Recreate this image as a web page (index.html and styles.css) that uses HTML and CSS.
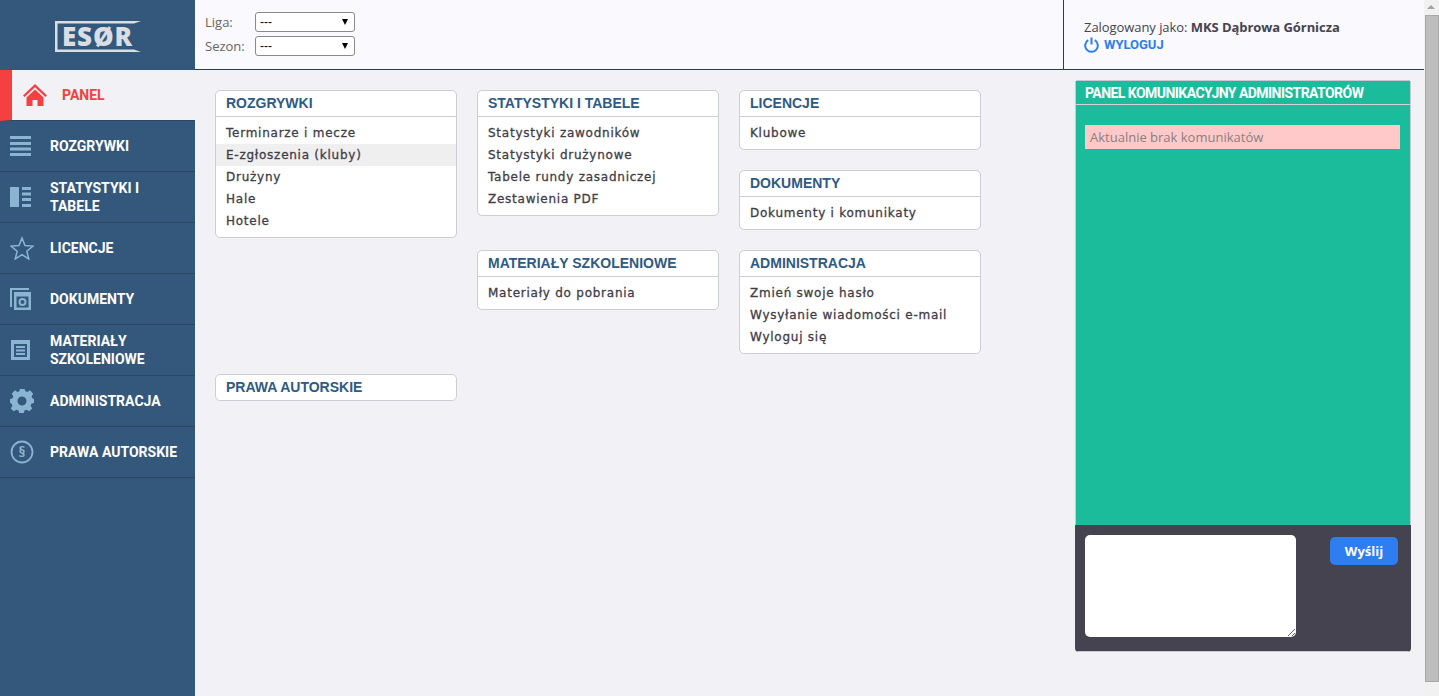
FILE: index.html
```html
<!DOCTYPE html>
<html>
<head>
  <title>ESOR - Panel</title>
  <link rel="stylesheet" href="styles.css">
</head>
<body>
  <div class="app">
    <aside class="sidebar">
      <div class="logo">
        <div class="logo-box">
          <svg width="87" height="31" viewBox="0 0 87 31">
            <path d="M0 0H86L79 2.500H2.500V28.500H79L86 31H0Z" fill="#d9dde4"/>
          </svg>
          <span class="logo-text">ESØR</span>
        </div>
      </div>
      <nav>
        <a class="nav-item active" href="#">
          <span class="nav-icon">
            <svg width="26" height="24" viewBox="0 0 26 24"><path d="M13 1L1 12.5l1.6 1.6L13 4.2l10.4 9.9 1.6-1.6ZM4.5 14.5V23h6v-6h5v6h6v-8.5L13 6.5Z" fill="#f44040"/></svg>
          </span>
          <span>PANEL</span>
        </a>
        <a class="nav-item" href="#">
          <span class="nav-icon">
            <svg width="22" height="22" viewBox="0 0 22 22"><path d="M0 1h21v3H0ZM0 7h21v3H0ZM0 12.500h21v3H0ZM0 18h21v3H0Z" fill="#8ab4d2"/></svg>
          </span>
          <span>ROZGRYWKI</span>
        </a>
        <a class="nav-item" href="#">
          <span class="nav-icon">
            <svg width="22" height="22" viewBox="0 0 22 22"><path d="M0 1h9v20H0ZM12 1h9v3h-9ZM12 6.500h9v3h-9ZM12 12h9v3h-9ZM12 18h9v3h-9Z" fill="#8ab4d2"/></svg>
          </span>
          <span>STATYSTYKI I TABELE</span>
        </a>
        <a class="nav-item" href="#">
          <span class="nav-icon">
            <svg width="24" height="24" viewBox="0 0 24 24"><path d="M12 2l3 7.500 8 .6-6.200 5.100 2 7.800L12 18.700 5.200 23l2-7.800L1 10.100l8-.6Z" fill="none" stroke="#8ab4d2" stroke-width="1.500"/></svg>
          </span>
          <span>LICENCJE</span>
        </a>
        <a class="nav-item" href="#">
          <span class="nav-icon">
            <svg width="22" height="22" viewBox="0 0 22 22"><path d="M1 19V1h18" fill="none" stroke="#8ab4d2" stroke-width="2"/><path d="M4 4h17v18H4Zm2.500 4.500v11h12v-11Z" fill="#8ab4d2" fill-rule="evenodd"/><circle cx="12.500" cy="14" r="3" fill="none" stroke="#8ab4d2" stroke-width="2"/></svg>
          </span>
          <span>DOKUMENTY</span>
        </a>
        <a class="nav-item" href="#">
          <span class="nav-icon">
            <svg width="22" height="22" viewBox="0 0 22 22"><path d="M1 1h19v20H1ZM4 5v13h13V5ZM6 7h9v2H6ZM6 10.500h9v2H6ZM6 14h9v2H6Z" fill="#8ab4d2" fill-rule="evenodd"/></svg>
          </span>
          <span>MATERIAŁY SZKOLENIOWE</span>
        </a>
        <a class="nav-item" href="#">
          <span class="nav-icon">
            <svg width="24" height="24" viewBox="0 0 24 24"><path d="M9.500 1h5l.6 3 2.300 1 2.600-1.700 3.200 3.500L21.600 9.300l.9 2.200 1.500.5v4l-2.500.6-.9 2.200 1.600 2.600-3 2.800-2.500-1.500-2.300.9-.6 2.400h-4.600l-.6-2.400-2.300-.9-2.500 1.500-3-2.800 1.600-2.600-.9-2.200L0 16v-4l2.400-.5.900-2.200L1.700 6.800l3.200-3.500 2.600 1.700 2.300-1ZM12 9.500a4.500 4.500 0 1 0 0 9 4.500 4.500 0 0 0 0-9Z" fill="#8ab4d2" fill-rule="evenodd" transform="translate(0 -2)"/></svg>
          </span>
          <span>ADMINISTRACJA</span>
        </a>
        <a class="nav-item" href="#">
          <span class="nav-icon">
            <svg width="24" height="24" viewBox="0 0 24 24"><circle cx="12" cy="12" r="10.500" fill="none" stroke="#8ab4d2" stroke-width="1.800"/><text class="par-text" x="12" y="17" text-anchor="middle">§</text></svg>
          </span>
          <span>PRAWA AUTORSKIE</span>
        </a>
      </nav>
    </aside>

    <div class="page">
      <header class="topbar">
        <div class="filters">
          <label class="filter">
            <span class="filter-label">Liga:</span>
            <span class="select-wrap"><select><option>---</option></select></span>
          </label>
          <label class="filter">
            <span class="filter-label">Sezon:</span>
            <span class="select-wrap"><select><option>---</option></select></span>
          </label>
        </div>
        <div class="user-box">
          <div class="user-name">Zalogowany jako: <strong>MKS Dąbrowa Górnicza</strong></div>
          <a class="logout" href="#">
            <svg width="15" height="16" viewBox="0 0 15 16"><path d="M4.200 3.200a6.300 6.300 0 1 0 6.600 0M7.500 0.500v7" fill="none" stroke="#2f7ef0" stroke-width="2"/></svg>
            WYLOGUJ
          </a>
        </div>
      </header>

      <div class="content">
        <main class="cards">
          <section class="card c-rozgrywki">
            <h3>ROZGRYWKI</h3>
            <ul>
              <li>Terminarze i mecze</li>
              <li class="hover">E-zgłoszenia (kluby)</li>
              <li>Drużyny</li>
              <li>Hale</li>
              <li>Hotele</li>
            </ul>
          </section>
          <section class="card c-statystyki">
            <h3>STATYSTYKI I TABELE</h3>
            <ul>
              <li>Statystyki zawodników</li>
              <li>Statystyki drużynowe</li>
              <li>Tabele rundy zasadniczej</li>
              <li>Zestawienia PDF</li>
            </ul>
          </section>
          <section class="card c-licencje">
            <h3>LICENCJE</h3>
            <ul><li>Klubowe</li></ul>
          </section>
          <section class="card c-dokumenty">
            <h3>DOKUMENTY</h3>
            <ul><li>Dokumenty i komunikaty</li></ul>
          </section>
          <section class="card c-materialy">
            <h3>MATERIAŁY SZKOLENIOWE</h3>
            <ul><li>Materiały do pobrania</li></ul>
          </section>
          <section class="card c-admin">
            <h3>ADMINISTRACJA</h3>
            <ul>
              <li>Zmień swoje hasło</li>
              <li>Wysyłanie wiadomości e-mail</li>
              <li>Wyloguj się</li>
            </ul>
          </section>
          <section class="card c-prawa">
            <h3 class="only">PRAWA AUTORSKIE</h3>
          </section>
        </main>

        <aside class="chat">
          <div class="chat-title">PANEL KOMUNIKACYJNY ADMINISTRATORÓW</div>
          <div class="chat-body">
            <div class="chat-empty">Aktualnie brak komunikatów</div>
          </div>
          <div class="chat-form">
            <textarea></textarea>
            <button>Wyślij</button>
          </div>
        </aside>
      </div>
    </div>
  </div>

  <!-- scrollbar as it shows in the screenshot -->
  <div class="scrollbar">
    <div class="scroll-up"></div>
    <div class="scroll-thumb"></div>
    <div class="scroll-down"></div>
  </div>
</body>
</html>
```

FILE: styles.css
```css
* {
  box-sizing: border-box;
}

body {
  margin: 0;
  height: 696px;
  overflow: hidden;
  background: #f1f1f6;
  font-family: "Open Sans", Arial, sans-serif;
  font-size: 13px;
  color: #45434f;
}

.app {
  display: flex;
  height: 100%;
  padding-right: 15px;
}

/* sidebar */
.sidebar {
  width: 195px;
  flex-shrink: 0;
  background: #34587c;
}

.logo {
  height: 70px;
  padding: 21px 0 0 55px;
}

.logo-box {
  position: relative;
  width: 87px;
  height: 31px;
  padding-left: 7px;
}

.logo-box svg {
  position: absolute;
  top: 0;
  left: 0;
}

.logo-text {
  display: block;
  font-family: "Open Sans", sans-serif;
  font-weight: 800;
  font-size: 26px;
  line-height: 31px;
  letter-spacing: 0.8px;
  color: #d9dde4;
}

.par-text {
  font-family: "Open Sans", sans-serif;
  font-size: 14px;
  font-weight: 700;
  fill: #8ab4d2;
}

.nav-item {
  display: flex;
  align-items: center;
  height: 51px;
  padding-right: 10px;
  border-bottom: 1px solid #2a4764;
  color: #fff;
  text-decoration: none;
  font-family: Roboto, sans-serif;
  font-weight: 700;
  font-size: 14px;
  line-height: 18px;
}

.nav-icon {
  display: flex;
  width: 50px;
  flex-shrink: 0;
  padding-left: 10px;
}

.nav-item.active {
  border-left: 12px solid #f44040;
  background: #f1f1f6;
  color: #f44040;
}

/* top bar */
.page {
  flex: 1;
  display: flex;
  flex-direction: column;
}

.topbar {
  display: flex;
  justify-content: space-between;
  height: 70px;
  background: #f9f9fe;
  border-bottom: 1px solid #2c3e50;
}

.filters {
  padding: 12px 0 0 10px;
}

.filter {
  display: flex;
  align-items: center;
  height: 20px;
  margin-bottom: 4px;
}

.filter-label {
  width: 50px;
  color: #666;
}

.select-wrap {
  position: relative;
  display: block;
  width: 100px;
  height: 20px;
}

.select-wrap::after {
  content: '';
  position: absolute;
  top: 7px;
  right: 7px;
  border-left: 3.500px solid transparent;
  border-right: 3.500px solid transparent;
  border-top: 6px solid #000;
}

select {
  appearance: none;
  display: block;
  width: 100%;
  height: 20px;
  padding: 0 0 0 4px;
  border: 1px solid #8a8a8a;
  border-radius: 3px;
  background: #fff;
  font-family: Arial, "Liberation Sans", sans-serif;
  font-size: 12px;
  color: #000;
}

.user-box {
  width: 361px;
  padding: 18px 0 0 20px;
  border-left: 1px solid #2c3e50;
  line-height: 18px;
}

.user-name {
  letter-spacing: -0.06px;
}

.user-box strong {
  font-weight: 700;
}

.logout {
  display: flex;
  align-items: center;
  gap: 5px;
  color: #2f7ef0;
  text-decoration: none;
  font-family: Roboto, sans-serif;
  font-weight: 700;
  font-size: 13px;
}

/* content */
.content {
  flex: 1;
  display: flex;
  justify-content: space-between;
  padding: 10px 13px 0 20px;
}

.cards {
  display: grid;
  grid-template-columns: repeat(3, 242px);
  grid-template-rows: 60px 60px 104px auto;
  gap: 20px;
  align-content: start;
  padding-top: 10px;
}

.card {
  align-self: start;
  background: #fff;
  border: 1px solid #cdcdd5;
  border-radius: 5px;
}

.c-rozgrywki { grid-area: 1 / 1 / 4 / 2; }
.c-statystyki { grid-area: 1 / 2 / 3 / 3; }
.c-licencje { grid-area: 1 / 3; }
.c-dokumenty { grid-area: 2 / 3; }
.c-materialy { grid-area: 3 / 2; }
.c-admin { grid-area: 3 / 3; }
.c-prawa { grid-area: 4 / 1; }

.card h3 {
  margin: 0;
  height: 26px;
  padding-left: 10px;
  border-bottom: 1px solid #cdcdd5;
  color: #2f5a84;
  font-family: "Liberation Sans", Arial, sans-serif;
  font-size: 14px;
  font-weight: 700;
  line-height: 24px;
}

.card h3.only {
  border-bottom: 0;
  height: 25px;
}

.card ul {
  list-style: none;
  margin: 0;
  padding: 5px 0;
}

.card li {
  height: 22px;
  padding-left: 10px;
  font-family: "DejaVu Sans", Verdana, sans-serif;
  font-size: 12px;
  font-weight: 500;
  line-height: 23px;
  letter-spacing: 0.75px;
  color: #3f3d49;
  -webkit-text-stroke: 0.3px #3f3d49;
}

.card li.hover {
  background: #efefef;
}

/* chat panel */
.chat {
  display: flex;
  flex-direction: column;
  width: 336px;
  height: 572px;
  border-radius: 4px;
  overflow: hidden;
}

.chat-title {
  height: 25px;
  padding-left: 9px;
  background: #1abc9c;
  border: 1px solid #c9c9d1;
  border-bottom-color: #cfd6d6;
  color: #fff;
  font-family: Roboto, sans-serif;
  font-weight: 700;
  font-size: 14px;
  letter-spacing: -0.55px;
  line-height: 24px;
}

.chat-body {
  flex: 1;
  padding: 20px 10px 0 9px;
  background: #1abc9c;
  border-left: 1px solid #c9c9d1;
  border-right: 1px solid #c9c9d1;
}

.chat-empty {
  height: 24px;
  padding-left: 5px;
  background: #ffc9c9;
  color: #8a7f80;
  font-size: 13px;
  line-height: 24px;
}

.chat-form {
  display: flex;
  justify-content: space-between;
  align-items: flex-start;
  height: 127px;
  padding: 10px 13px 0 10px;
  background: #454350;
  border-bottom: 1px solid #c9c9d1;
}

.chat-form textarea {
  display: block;
  width: 211px;
  height: 102px;
  border: 0;
  border-radius: 5px;
  background: #fff;
}

.chat-form button {
  width: 68px;
  height: 28px;
  margin-top: 2px;
  border: 0;
  border-radius: 5px;
  background: #2f7ef0;
  color: #fff;
  font-family: "Open Sans", sans-serif;
  font-size: 13px;
  font-weight: 700;
}

/* fake scrollbar */
.scrollbar {
  position: fixed;
  top: 0;
  right: 0;
  bottom: 0;
  display: flex;
  flex-direction: column;
  width: 15px;
  background: #f1f1f1;
}

.scroll-up,
.scroll-down {
  position: relative;
  height: 15px;
  flex-shrink: 0;
}

.scroll-up::after {
  content: '';
  position: absolute;
  top: 5px;
  left: 3px;
  border-left: 4px solid transparent;
  border-right: 4px solid transparent;
  border-bottom: 4px solid #a3a3a3;
}

.scroll-down {
  height: 14px;
}

.scroll-thumb {
  flex: 1;
  margin-left: 1px;
  background: #bdbdbd;
  border: 1px solid #a8a8a8;
}
```
